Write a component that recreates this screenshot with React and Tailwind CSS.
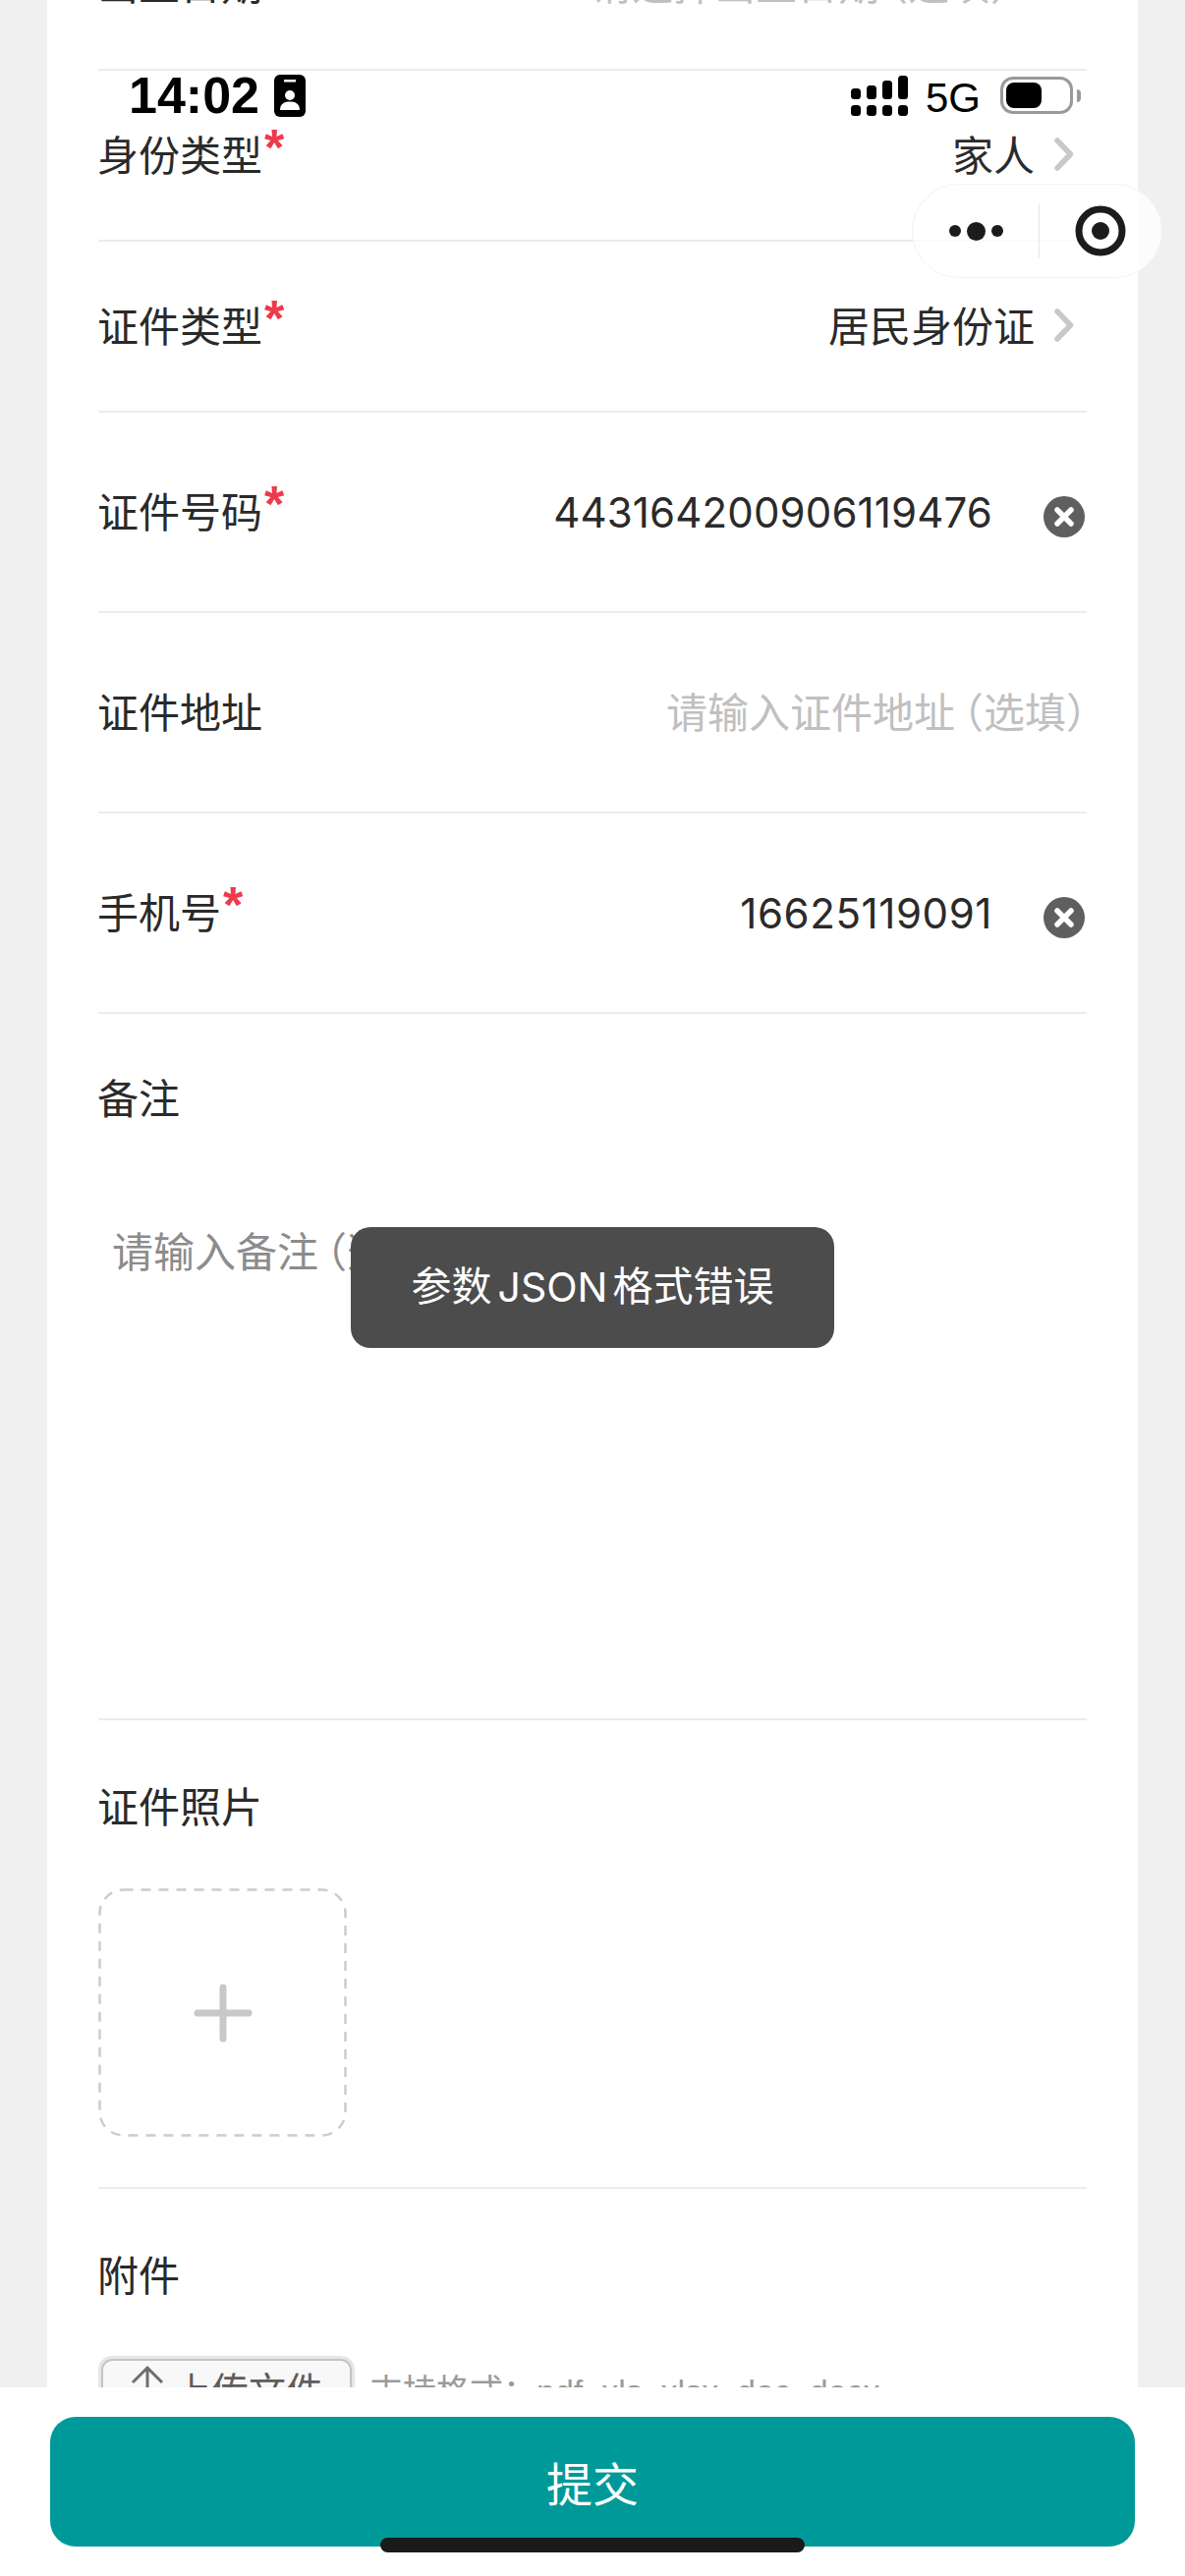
import React from "react";

const FONT = "[font-family:'Liberation_Sans','Noto_Sans_CJK_SC',sans-serif]";
const HALT = "[font-feature-settings:'halt']";

function Chevron() {
  return (
    <svg width="20" height="34" viewBox="0 0 20 34" className="shrink-0 ml-[20px] mr-[13px] -mt-[6px]">
      <path d="M3 3 L16.5 17 L3 31" fill="none" stroke="#c8c8c8" strokeWidth="5.5" strokeLinecap="round" strokeLinejoin="round" />
    </svg>
  );
}

function Clear() {
  return (
    <svg width="42" height="42" viewBox="0 0 42 42" className="shrink-0 ml-[52px] mr-[2px] mt-[6px]">
      <circle cx="21" cy="21" r="21" fill="#5f5f5f" />
      <path d="M14 14 L28 28 M28 14 L14 28" stroke="#fff" strokeWidth="5.5" strokeLinecap="round" />
    </svg>
  );
}

function Star() {
  return (
    <span className="ml-[2px] h-[42px] text-[52px] leading-[52px] font-bold text-[#ee3a4c] -mt-[11px]">*</span>
  );
}

function Ph({ text, tail, className = "" }) {
  return (
    <span className={`text-[42px] leading-[50px] text-[#c0c0c0] ${className}`}>
      {text}
      <span className={`${HALT} ml-[8px]`}>（</span>
      {tail}
      <span className={HALT}>）</span>
    </span>
  );
}

function Digits({ children, className = "" }) {
  return <span className={`[font-family:Inter,sans-serif] text-[42px] leading-[50px] -mt-[2px] ${className}`}>{children}</span>;
}

function Row({ label, required, height, children }) {
  return (
    <div className={`flex items-center justify-between border-b-2 border-[#ececec] pt-[4px] ${height}`}>
      <div className="flex items-start -ml-px text-[42px] leading-[50px] text-[#2a2a2a]">
        <span>{label}</span>
        {required && <Star />}
      </div>
      <div className="flex items-center text-[42px] leading-[50px] text-[#2a2a2a]">{children}</div>
    </div>
  );
}

function StatusBar() {
  return (
    <div className="absolute left-0 top-0 w-full h-[130px] flex justify-between items-start pl-[131px] pr-[106px] pt-[76px]">
      <div className="flex items-center h-[43px] gap-[15px]">
        <span className="text-[52px] leading-[43px] font-bold text-black">14:02</span>
        <svg width="32" height="43" viewBox="0 0 32 43">
          <rect width="32" height="43" rx="6" fill="#000" />
          <rect x="10" y="5" width="12" height="2.5" fill="#fff" />
          <circle cx="16" cy="21" r="5" fill="#fff" />
          <path d="M6 36 C6 29 11 27.5 16 27.5 C21 27.5 26 29 26 36 Z" fill="#fff" />
        </svg>
      </div>
      <div className="flex items-start">
        <svg width="58" height="41" viewBox="0 0 58 41" className="mt-[1px]">
          <rect x="0" y="13" width="10" height="11" rx="3.5" />
          <rect x="0" y="30" width="10" height="11" rx="3.5" />
          <rect x="16" y="10" width="10" height="14" rx="3.5" />
          <rect x="16" y="30" width="10" height="11" rx="3.5" />
          <rect x="32" y="5" width="10" height="19" rx="3.5" />
          <rect x="32" y="30" width="10" height="11" rx="3.5" />
          <rect x="48" y="0" width="10" height="24" rx="3.5" />
          <rect x="48" y="30" width="10" height="11" rx="3.5" />
        </svg>
        <span className="ml-[18px] mt-[3px] text-[42px] leading-[42px] text-black">5G</span>
        <div className="ml-[20px] mt-[2px] flex items-center">
          <div className="w-[74px] h-[38px] rounded-[13px] border-[3px] border-[#9a9a9a] p-[3px]">
            <div className="w-[36px] h-[26px] rounded-[8px] bg-black" />
          </div>
          <div className="ml-[4px] w-[4px] h-[13px] rounded-r-full bg-[#9a9a9a]" />
        </div>
      </div>
    </div>
  );
}

function Capsule() {
  return (
    <div className="absolute left-[928px] top-[187px] w-[255px] h-[96px] rounded-[48px] bg-white/80 border border-[#f3f3f3] flex items-center">
      <div className="w-[128px] flex items-center justify-center gap-[6px]">
        <span className="w-[12px] h-[12px] rounded-full bg-[#1c1c1c]" />
        <span className="w-[19px] h-[19px] rounded-full bg-[#1c1c1c]" />
        <span className="w-[12px] h-[12px] rounded-full bg-[#1c1c1c]" />
      </div>
      <div className="w-px h-[56px] bg-[#e6e6e6]" />
      <div className="flex-1 flex items-center justify-center">
        <svg width="52" height="52" viewBox="0 0 52 52">
          <circle cx="26" cy="26" r="22" fill="none" stroke="#1c1c1c" strokeWidth="7" />
          <circle cx="26" cy="26" r="9" fill="#1c1c1c" />
        </svg>
      </div>
    </div>
  );
}

export default function App() {
  return (
    <div className={`relative w-[1206px] h-[2622px] overflow-hidden bg-[#f0f0f0] ${FONT}`}>
      <div className="mx-[48px] h-full bg-white px-[52px] -mt-[102px]">
        <div className="h-[2800px]">
          <Row label="出生日期" height="h-[174px]">
            <Ph text="请选择出生日期" tail="选填" className="mr-[24px]" />
            <Chevron />
          </Row>
          <Row label="身份类型" required height="h-[174px]">
            <span>家人</span>
            <Chevron />
          </Row>
          <Row label="证件类型" required height="h-[174px]">
            <span>居民身份证</span>
            <Chevron />
          </Row>
          <Row label="证件号码" required height="h-[204px]">
            <Digits className="tracking-[0.15px]">443164200906119476</Digits>
            <Clear />
          </Row>
          <Row label="证件地址" height="h-[204px]">
            <Ph text="请输入证件地址" tail="选填" />
          </Row>
          <Row label="手机号" required height="h-[204px]">
            <Digits className="tracking-[0.6px]">16625119091</Digits>
            <Clear />
          </Row>
          <div className="h-[719px] border-b-2 border-[#ececec] pt-[63px]">
            <div className="-ml-px text-[42px] leading-[50px] text-[#2a2a2a]">备注</div>
            <div className="mt-[106px] pl-[14px] text-[42px] leading-[50px] text-[#8c8c8c]">
              请输入备注
              <span className={`${HALT} ml-[8px]`}>（</span>
              选填
              <span className={HALT}>）</span>
            </div>
          </div>
          <div className="h-[477px] border-b-2 border-[#ececec] pt-[65px]">
            <div className="-ml-px text-[42px] leading-[50px] text-[#2a2a2a]">证件照片</div>
            <div className="relative mt-[56px] w-[253px] h-[253px] flex items-center justify-center">
              <svg width="253" height="253" viewBox="0 0 253 253" className="absolute inset-0">
                <rect x="1.5" y="1.5" width="250" height="250" rx="24" fill="none" stroke="#cccccc" strokeWidth="2.5" strokeDasharray="10 8" />
              </svg>
              <svg width="60" height="60" viewBox="0 0 60 60">
                <path d="M30 4 V56 M4 30 H56" stroke="#c8c8c8" strokeWidth="7" strokeLinecap="round" />
              </svg>
            </div>
          </div>
          <div className="pt-[65px]">
            <div className="-ml-px text-[42px] leading-[50px] text-[#2a2a2a]">附件</div>
            <div className="mt-[55px] flex items-start">
              <div className="w-[261px] h-[68px] rounded-[14px] border-[3px] border-[#e6e6e6]">
                <div className="h-full rounded-[11px] border-2 border-[#c4c4c4] bg-[#f8f8f8] flex items-start pl-[27px] pt-[2px]">
                  <svg width="36" height="44" viewBox="0 0 36 44" className="shrink-0">
                    <path d="M18 5 V44 M3 20 L18 5 L33 20" fill="none" stroke="#6e6e6e" strokeWidth="3" />
                  </svg>
                  <span className="ml-[9px] mt-[5px] text-[38px] leading-[48px] whitespace-nowrap text-[#5e5e5e]">上传文件</span>
                </div>
              </div>
              <span className="ml-[15px] mt-[12px] text-[34px] leading-[48px] whitespace-nowrap text-[#9a9a9a]">支持格式：pdf, xls, xlsx, doc, docx</span>
            </div>
          </div>
        </div>
      </div>

      <StatusBar />
      <Capsule />

      <div className="absolute left-[357px] top-[1249px] w-[492px] h-[123px] rounded-[20px] bg-[#4c4c4c] flex items-center justify-center text-[41px] text-white whitespace-nowrap">
        <span>参数</span>
        <span className="[font-family:Inter,sans-serif] ml-[6px] mr-[5px]">JSON</span>
        <span>格式错误</span>
      </div>

      <div className="absolute left-0 bottom-0 w-full h-[192px] bg-white pt-[30px] px-[51px]">
        <div className="h-[132px] rounded-[26px] bg-[#009999] flex items-center justify-center pt-[8px] text-[47px] text-white">提交</div>
      </div>
      <div className="absolute left-[387px] top-[2583px] w-[432px] h-[15px] rounded-full bg-[#1a1a1a]" />
    </div>
  );
}
